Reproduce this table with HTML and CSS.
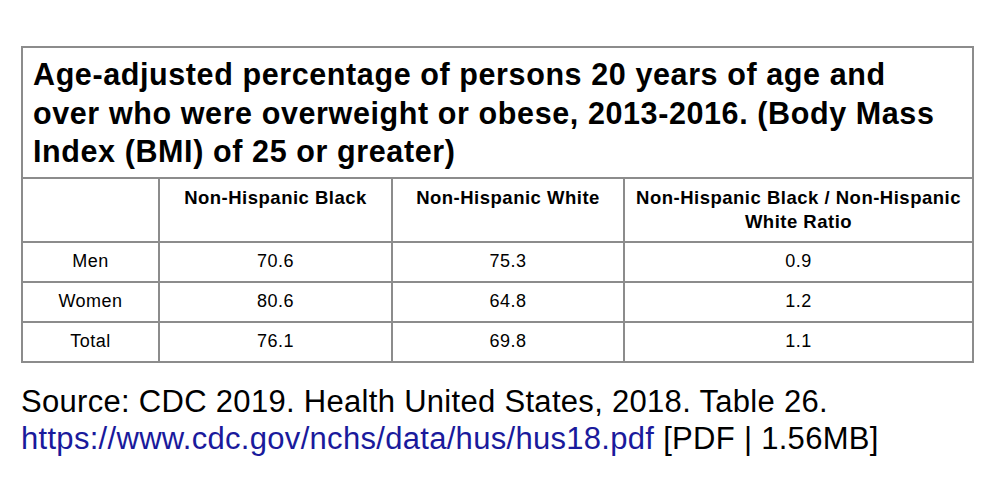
FILE: index.html
```html
<!DOCTYPE html>
<html lang="en">
<head>
<meta charset="utf-8">
<title>Overweight or obese, 2013-2016</title>
<link rel="stylesheet" href="styles.css">
</head>
<body>
<main class="page">
  <table class="data">
    <colgroup>
      <col class="c1"><col class="c2"><col class="c3"><col class="c4">
    </colgroup>
    <thead>
      <tr>
        <th class="title" colspan="4">Age-adjusted percentage of persons 20 years of age and over who were overweight or obese, 2013-2016. (Body Mass Index (BMI) of 25 or greater)</th>
      </tr>
      <tr class="head">
        <th></th>
        <th>Non-Hispanic Black</th>
        <th>Non-Hispanic White</th>
        <th>Non-Hispanic Black / Non-Hispanic White Ratio</th>
      </tr>
    </thead>
    <tbody>
      <tr><td>Men</td><td>70.6</td><td>75.3</td><td>0.9</td></tr>
      <tr><td>Women</td><td>80.6</td><td>64.8</td><td>1.2</td></tr>
      <tr><td>Total</td><td>76.1</td><td>69.8</td><td>1.1</td></tr>
    </tbody>
  </table>
  <p class="source">Source: CDC 2019. Health United States, 2018. Table 26.<br><a href="#">https://www.cdc.gov/nchs/data/hus/hus18.pdf</a> [PDF | 1.56MB]</p>
</main>
</body>
</html>
```

FILE: styles.css
```css
html, body {
  margin: 0;
  padding: 0;
  background: #ffffff;
}

.page {
  padding: 46px 0 0 21px;
  font-family: "Liberation Sans", Arial, sans-serif;
  color: #000;
}

.data {
  border-collapse: collapse;
  table-layout: fixed;
  width: 951px;
  border: 2px solid #8c8c8c;
}

.c1 { width: 137px; }
.c2 { width: 233px; }
.c3 { width: 232px; }
.c4 { width: 349px; }

.data th,
.data td {
  border: 2px solid #8c8c8c;
  padding: 0;
}

.data th.title {
  text-align: left;
  font-size: 30.5px;
  line-height: 38.5px;
  font-weight: bold;
  letter-spacing: 0.6px;
  padding: 7px 22px 6px 10px;
  height: 115px;
  vertical-align: top;
}

.head th {
  font-size: 18.5px;
  line-height: 24px;
  font-weight: bold;
  letter-spacing: 0.5px;
  vertical-align: top;
  text-align: center;
  padding: 7px 4px 0 4px;
  height: 55px;
}

.data td {
  font-size: 18px;
  letter-spacing: 0.5px;
  text-align: center;
  vertical-align: middle;
  height: 38px;
}

.source {
  margin: 20px 0 0 0;
  font-size: 31px;
  line-height: 37px;
  letter-spacing: 0.3px;
}

.source a {
  color: #1a1a9c;
  text-decoration: none;
}
```
